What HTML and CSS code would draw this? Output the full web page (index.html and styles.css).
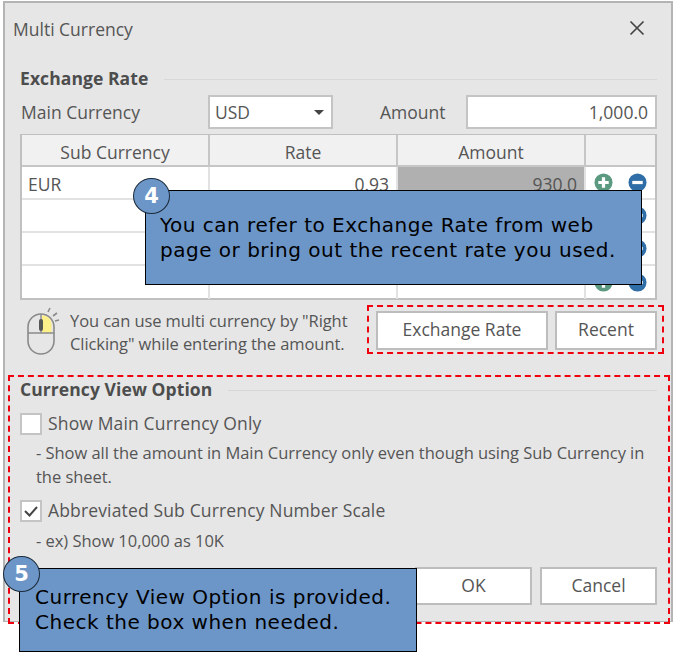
FILE: index.html
```html
<!DOCTYPE html>
<html lang="en">
<head>
<meta charset="utf-8">
<title>Multi Currency</title>
<link rel="stylesheet" href="styles.css">
</head>
<body>
<main class="stage">
  <section class="dialog">
    <header class="titlebar">
      <h1 class="title">Multi Currency</h1>
      <svg class="close" width="16" height="16" viewBox="0 0 16 16"><path d="M1.5 1.5l13 13M14.5 1.5l-13 13" stroke="#444" stroke-width="1.7" fill="none"/></svg>
    </header>
    <div class="group-head exchange-head"><h2 class="group-title">Exchange Rate</h2><span class="rule"></span></div>
    <div class="main-row">
      <label class="field-label main-label">Main Currency</label>
      <div class="select"><span>USD</span><i class="caret"></i></div>
      <label class="field-label amount-label">Amount</label>
      <div class="input">1,000.0</div>
    </div>
    <div class="table">
      <div class="cell head">Sub Currency</div><div class="cell head">Rate</div><div class="cell head">Amount</div><div class="cell head last"></div>
      <div class="cell">EUR</div><div class="cell num">0.93</div><div class="cell num calc">930.0</div>
      <div class="cell last icons">
        <svg class="ico" viewBox="0 0 20 20"><circle cx="10" cy="10" r="9.5" fill="#5b9a80"/><path d="M10 4.5v11M4.5 10h11" stroke="#fff" stroke-width="3.4"/></svg>
        <svg class="ico" viewBox="0 0 20 20"><circle cx="10" cy="10" r="9.5" fill="#2f6ea6"/><path d="M4.5 10h11" stroke="#fff" stroke-width="3.4"/></svg>
      </div>
      <div class="cell"></div><div class="cell"></div><div class="cell"></div>
      <div class="cell last icons">
        <svg class="ico" viewBox="0 0 20 20"><circle cx="10" cy="10" r="9.5" fill="#5b9a80"/><path d="M10 4.5v11M4.5 10h11" stroke="#fff" stroke-width="3.4"/></svg>
        <svg class="ico" viewBox="0 0 20 20"><circle cx="10" cy="10" r="9.5" fill="#2f6ea6"/><path d="M4.5 10h11" stroke="#fff" stroke-width="3.4"/></svg>
      </div>
      <div class="cell"></div><div class="cell"></div><div class="cell"></div>
      <div class="cell last icons">
        <svg class="ico" viewBox="0 0 20 20"><circle cx="10" cy="10" r="9.5" fill="#5b9a80"/><path d="M10 4.5v11M4.5 10h11" stroke="#fff" stroke-width="3.4"/></svg>
        <svg class="ico" viewBox="0 0 20 20"><circle cx="10" cy="10" r="9.5" fill="#2f6ea6"/><path d="M4.5 10h11" stroke="#fff" stroke-width="3.4"/></svg>
      </div>
      <div class="cell end"></div><div class="cell end"></div><div class="cell end"></div>
      <div class="cell last end icons">
        <svg class="ico" viewBox="0 0 20 20"><circle cx="10" cy="10" r="9.5" fill="#5b9a80"/><path d="M10 4.5v11M4.5 10h11" stroke="#fff" stroke-width="3.4"/></svg>
        <svg class="ico" viewBox="0 0 20 20"><circle cx="10" cy="10" r="9.5" fill="#2f6ea6"/><path d="M4.5 10h11" stroke="#fff" stroke-width="3.4"/></svg>
      </div>
    </div>
    <div class="hint-row">
      <svg class="mouse" width="34" height="48" viewBox="0 0 34 48">
        <path d="M15 8.500C20 8.500 24 11 24.500 17V26H15Z" fill="#fdf08a"/>
        <rect x="1" y="7" width="26" height="40" rx="13" fill="none" stroke="#8a8a8a" stroke-width="1.600"/>
        <path d="M1 26H27M14 7V26" stroke="#8a8a8a" stroke-width="1.400"/>
        <rect x="12" y="12" width="4" height="12" rx="2" fill="#555"/>
        <path d="M21 5l2-4M26 9l4-3M28 14l4-1" stroke="#8a8a8a" stroke-width="1.600"/>
      </svg>
      <p class="hint">You can use multi currency by "Right<br>Clicking" while entering the amount.</p>
      <button class="btn rate-btn">Exchange Rate</button>
      <button class="btn recent-btn">Recent</button>
    </div>
    <div class="group-head view-head"><h2 class="group-title">Currency View Option</h2><span class="rule"></span></div>
    <div class="check-row first"><span class="box"></span><span class="check-label">Show Main Currency Only</span></div>
    <p class="desc">- Show all the amount in Main Currency only even though using Sub Currency in<br>the sheet.</p>
    <div class="check-row second"><span class="box"><svg width="16" height="14" viewBox="0 0 16 14"><path d="M2 7l4.500 4.500L14 3" stroke="#444" stroke-width="2" fill="none"/></svg></span><span class="check-label">Abbreviated Sub Currency Number Scale</span></div>
    <p class="desc short">- ex) Show 10,000 as 10K</p>
    <footer class="footer">
      <button class="btn foot-btn">OK</button>
      <button class="btn foot-btn">Cancel</button>
    </footer>
  </section>
  <div class="dash dash-buttons"></div>
  <div class="dash dash-view"></div>
  <aside class="note note-four"><p>You can refer to Exchange Rate from web<br>page or bring out the recent rate you used.</p></aside>
  <span class="badge badge-four">4</span>
  <aside class="note note-five"><p>Currency View Option is provided.<br>Check the box when needed.</p></aside>
  <span class="badge badge-five">5</span>
</main>
</body>
</html>
```
FILE: styles.css
```css
* { box-sizing: border-box; }
html, body { margin: 0; padding: 0; background: #fff; }
body { font-family: "Open Sans", "Noto Sans", sans-serif; color: #555; }
.stage { position: relative; width: 675px; height: 652px; overflow: hidden; padding: 1px 0 0 3px; }
.dialog { width: 670px; height: 621px; background: #e6e6e6; border: 2px solid #b4b4b4; border-bottom-width: 1px; padding: 0 14px 0 15px; display: flex; flex-direction: column; }
.titlebar { display: flex; justify-content: space-between; align-items: center; height: 64px; margin-left: -7px; padding-bottom: 12px; flex: none; }
.title { margin: 0; font-size: 17.500px; font-weight: 400; color: #555; }
.close { margin-right: 12px; margin-top: -3px; }
.group-head { display: flex; align-items: center; gap: 16px; flex: none; }
.exchange-head { height: 24px; }
.group-title { margin: -2px 0 0; font-size: 17.500px; font-weight: 700; color: #4d4d4d; letter-spacing: 0.080px; white-space: nowrap; }
.rule { flex: 1; height: 1px; background: #d8d8d8; }
.main-row { display: flex; align-items: center; height: 34px; margin-top: 4px; flex: none; }
.field-label { font-size: 17.500px; white-space: nowrap; }
.main-label { width: 188px; padding-left: 1px; }
.select { width: 125px; height: 34px; background: #fff; border: 2px solid #c4c4c4; display: flex; align-items: center; justify-content: space-between; padding: 0 6px 0 5px; font-size: 17.500px; }
.caret { width: 0; height: 0; border-left: 5px solid transparent; border-right: 5px solid transparent; border-top: 5px solid #444; margin-right: 1px; }
.amount-label { margin-left: 47px; width: 86px; }
.input { width: 191px; height: 34px; background: #fff; border: 2px solid #c4c4c4; display: flex; align-items: center; justify-content: flex-end; padding: 0 7px; font-size: 17.500px; }
.table { display: grid; grid-template-columns: 188px 188px 188px 69px; grid-template-rows: 32px repeat(3, 33px) 33px; width: 637px; height: 166px; margin-top: 5px; flex: none; background: #fff; border: 2px solid #c0c0c0; border-top-width: 1px; }
.cell { border-right: 2px solid #e2e2e2; border-bottom: 2px solid #e2e2e2; display: flex; align-items: center; padding: 2px 6px 0; font-size: 17.500px; }
.head { background: #f1f1f1; justify-content: center; border-color: #c6c6c6; padding-top: 3px; }
.num { justify-content: flex-end; padding-right: 7px; }
.calc { background: #b0b0b0; }
.last { border-right: 0; }
.end { border-bottom: 0; }
.icons { justify-content: flex-start; padding: 0 0 0 8px; gap: 15px; }
.ico { width: 19px; height: 19px; flex: none; }
.hint-row { display: flex; align-items: center; height: 56px; margin-top: 2px; flex: none; }
.mouse { flex: none; margin: 2px 0 0 7px; }
.hint { margin: 3px 0 0 9px; width: 306px; font-size: 16.500px; line-height: 23px; letter-spacing: -0.080px; white-space: nowrap; }
.btn { background: #fff; border: 2px solid #bdbdbd; font-family: inherit; color: #555; font-size: 17.500px; height: 39px; padding: 0 0 2px; flex: none; }
.rate-btn { width: 172px; }
.recent-btn { width: 102px; margin-left: 7px; }
.view-head { height: 24px; margin-top: 20px; }
.check-row { display: flex; align-items: center; height: 22px; gap: 6px; flex: none; }
.first { margin-top: 11px; }
.second { margin-top: 11px; }
.box { width: 22px; height: 22px; flex: none; background: #fff; border: 2px solid #c4c4c4; display: flex; align-items: center; justify-content: center; }
.check-label { font-size: 17.500px; letter-spacing: 0.150px; margin-top: -2px; }
.desc { margin: 6px 0 0 16px; font-size: 16.500px; line-height: 24px; letter-spacing: -0.040px; white-space: nowrap; flex: none; }
.short { margin-top: 7px; }
.footer { display: flex; justify-content: flex-end; gap: 8px; margin-top: 14px; flex: none; }
.foot-btn { width: 117px; height: 38px; }
.dash { position: absolute; border: 2px dashed #f0000f; }
.dash-buttons { left: 367px; top: 305px; width: 297px; height: 49px; }
.dash-view { left: 8px; top: 375px; width: 662px; height: 249px; }
.note { position: absolute; background: #6d96c8; border: 1px solid #000; color: #000; font-family: "DejaVu Sans", Verdana, sans-serif; font-size: 20px; letter-spacing: 0.500px; line-height: 25px; }
.note p { margin: 0; white-space: nowrap; }
.note-four { left: 145px; top: 190px; width: 497px; height: 95px; padding: 22px 0 0 14px; }
.note-five { left: 19px; top: 568px; width: 398px; height: 84px; padding: 16px 0 0 15px; }
.badge { position: absolute; width: 37px; height: 36px; border-radius: 50%; background: #6d96c8; border: 1px solid #1a2a3a; color: #fff; font-family: "DejaVu Sans", sans-serif; font-weight: 700; font-size: 21px; display: flex; align-items: center; justify-content: center; }
.badge-four { left: 133px; top: 178px; }
.badge-five { left: 3px; top: 556px; }
```
